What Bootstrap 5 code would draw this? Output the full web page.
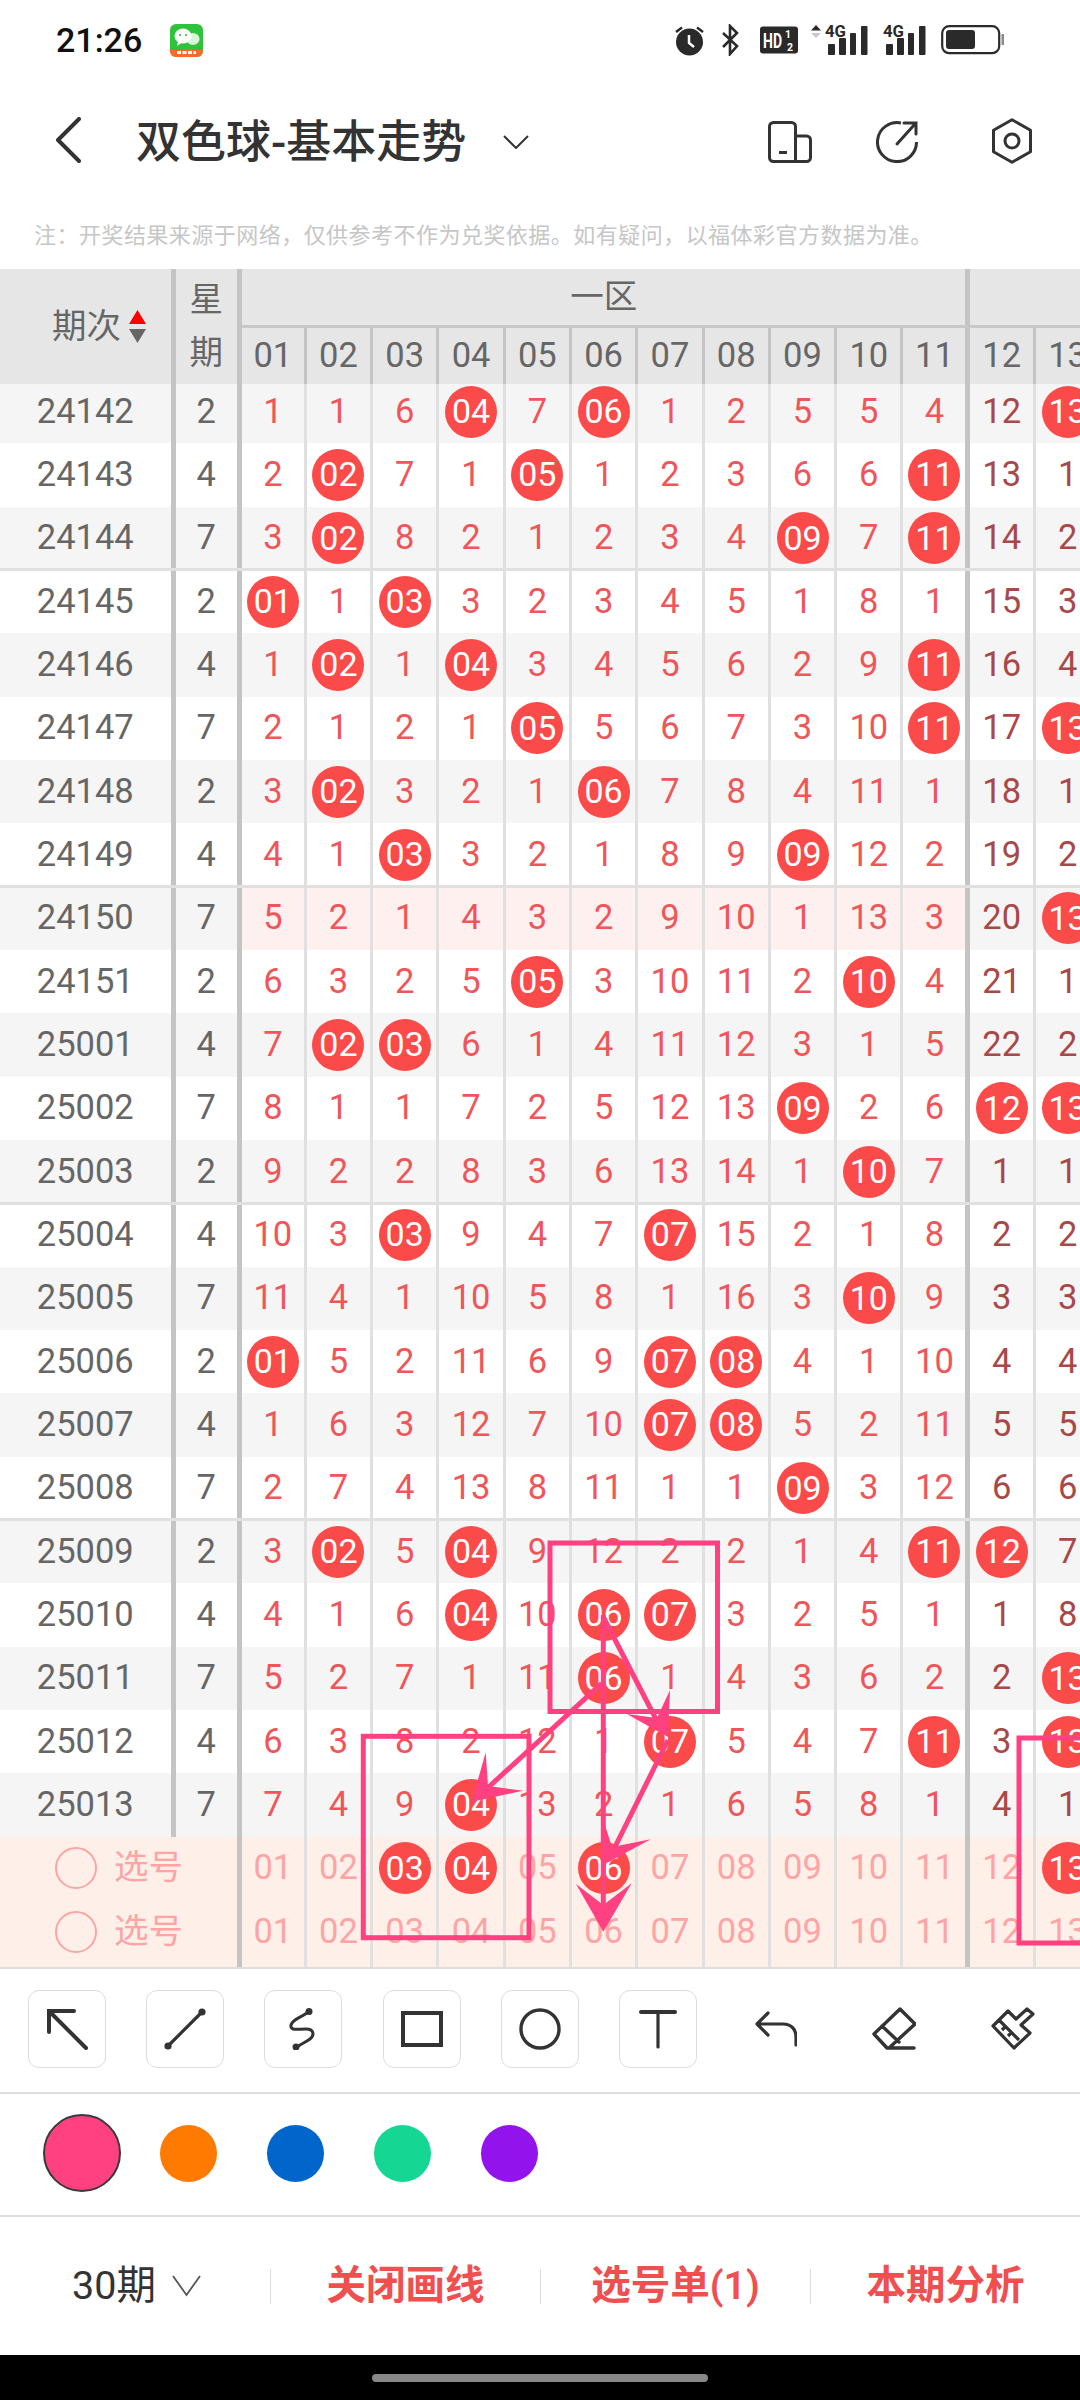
<!DOCTYPE html>
<html lang="zh-CN">
<head>
  <meta charset="UTF-8">
  <meta name="viewport" content="width=device-width, initial-scale=1">
  <title>双色球-基本走势</title>
  <link href="https://cdn.jsdelivr.net/npm/bootstrap@5.3.0/dist/css/bootstrap.min.css" rel="stylesheet">
  <style>
    :root {
      --cols: 175.6px 66.4px 64.8px repeat(9, 66.3px) 67px 65.5px 66.3px;
      --sep-dark: #c4c4c4;
      --sep-light: #e0e0e0;
      --ball: #fb4a4a;
      --pen: #ff4081;
    }
    body {
      font-family: Roboto, "Noto Sans CJK SC", sans-serif;
      background: #fff;
      color: #333;
    }
    .phone { position: relative; width: 1080px; height: 2400px; overflow: hidden; }

    /* status bar */
    .status-bar { height: 80px; padding: 0 75px 0 56px; }
    .status-time { font-size: 34px; font-weight: 500; color: #111; margin-right: 28px; }
    .status-icons { column-gap: 12px; }
    .sig-icon { margin-bottom: 4px; }

    /* title */
    .title-bar { height: 124px; padding: 0 47px 0 55px; }
    .title-back { margin-bottom: 5px; }
    .title-text { font-size: 45px; font-weight: 500; color: #333; margin-left: 55px; line-height: 1; }
    .title-drop { margin-left: 37px; }
    .nav-device { margin-bottom: 1px; }
    .nav-share { margin-left: 64px; margin-bottom: 1px; }
    .nav-hex { margin-left: 73px; margin-bottom: 3px; }
    .note-line { height: 65px; padding: 0 0 3px 34px; font-size: 22px; letter-spacing: .47px; color: #c6c6c6; white-space: nowrap; }

    /* trend table */
    .trend { height: 1698px; overflow: hidden; font-size: 34.5px; }
    .trend-head { position: relative; z-index: 1; display: grid; grid-template-columns: var(--cols); grid-template-rows: 59px 56px; height: 115px; background: #e6e6e6; color: #666; }
    .head-side { grid-row: 1 / 3; border-right: 5px solid var(--sep-dark); }
    .head-stack { line-height: 53px; font-size: 33.5px; }
    .head-period { font-size: 34.5px; padding-left: 52px; }
    .head-zone { border-bottom: 3px solid #c8c8c8; }
    .head-zone-a { grid-column: 3 / 14; font-size: 33.5px; border-right: 5px solid var(--sep-dark); }
    .head-zone-b { grid-column: 14 / 16; }
    .head-num { border-right: 3px solid var(--sep-dark); }
    .head-num.is-edge { border-right-width: 5px; }
    .trend-body { margin-top: -4px; }
    .tr-row { position: relative; display: grid; grid-template-columns: var(--cols); height: 63.33px; background: #fff; }
    .tr-row.is-gray { background: #f5f5f5; }
    .tr-row.is-pick { background: #ffefe9; }
    .tr-row.is-last { height: 66.83px; }
    .tr-row.is-last .tr-cell { padding-bottom: 3.5px; }
    .tr-row.has-line::before { content: ""; position: absolute; left: 0; right: 0; top: -1.5px; height: 3px; background: #e0e0e0; z-index: 1; }
    .tr-cell { display: flex; align-items: center; justify-content: center; color: #f0555a; border-right: 3px solid var(--sep-light); }
    .tr-cell.is-hl { background: #fff0f0; }
    .tr-cell.is-dark { color: #a84848; }
    .tr-cell.is-side { color: #666; border-right: 5px solid var(--sep-dark); }
    .tr-cell.is-edge { border-right: 5px solid var(--sep-dark); }
    .is-pick .tr-cell, .is-pick .tr-cell.is-dark { color: #fda4a4; }
    .is-pick .tr-cell.tr-pick { grid-column: 1 / 3; padding-left: 55px; color: #fda4a4; font-size: 34.5px; justify-content: flex-start; column-gap: 17px; }
    .pick-ring { width: 42px; height: 42px; border: 2.5px solid #fca5a5; }
    .tr-ball { width: 52px; height: 52px; background: var(--ball); color: #fff; display: flex; align-items: center; justify-content: center; font-size: 34px; }

    /* drawing tools */
    .tool-row { height: 127px; padding: 0 0 3px 28px; column-gap: 40.2px; border-top: 2px solid #ddd; border-bottom: 2px solid #ddd; }
    .tool-btn { width: 78px; height: 78px; padding: 0; display: flex; align-items: center; justify-content: center; background: #fff; border: 1.5px solid #ddd; border-radius: 11px; }
    .tool-btn.is-plain { border-color: transparent; }
    .swatch-row { height: 123px; padding: 0 0 3px 28px; border-bottom: 2px solid #ddd; }
    .swatch-slot { width: 107px; }
    .swatch { width: 57px; height: 57px; }
    .swatch.is-on { width: 78px; height: 78px; border: 2px solid #3a3a3a; }

    /* bottom bar */
    .bottom-bar { height: 138px; }
    .bottom-seg { height: 35px; font-size: 39.5px; font-weight: 600; color: #ef4f4f; }
    .bottom-seg + .bottom-seg { border-left: 1.5px solid #ddd; }
    .bottom-range { color: #333; font-weight: 400; column-gap: 16px; padding-left: 3px; }
    .home-bar { height: 45px; background: #000; }
    .home-pill { width: 336px; height: 8px; background: #888; border-radius: 4px; }

    .pen-layer { position: absolute; left: 0; top: 0; z-index: 2; pointer-events: none; }
  </style>
</head>
<body>
<div class="phone">

  <div class="status-bar d-flex align-items-center">
    <span class="status-time">21:26</span>
    <svg width="33" height="33" viewBox="0 0 33 33">
      <rect width="33" height="33" rx="6" fill="#2fc23b"/>
      <path d="M0 26H33V27A6 6 0 0 1 27 33H6A6 6 0 0 1 0 27Z" fill="#ff6a2a"/>
      <path d="M7 28.5H26" stroke="#fff" stroke-width="3" stroke-dasharray="4 1.5"/>
      <ellipse cx="23" cy="15" rx="6.5" ry="6" fill="#d8f5d8"/>
      <ellipse cx="13" cy="12" rx="8.5" ry="7.5" fill="#fff"/>
      <path d="M8 17L7 22L13 18Z" fill="#fff"/>
      <circle cx="10" cy="11" r="1.1" fill="#2fc23b"/><circle cx="16" cy="11" r="1.1" fill="#2fc23b"/>
    </svg>
    <div class="status-icons d-flex align-items-center ms-auto">
      <svg width="29" height="32" viewBox="0 0 29 32">
        <circle cx="14.5" cy="18" r="13.5" fill="#2a2a2a"/>
        <path d="M1 8L7 3.5M28 8L22 3.5" stroke="#2a2a2a" stroke-width="2.5"/>
        <path d="M14 11V19L19 23" stroke="#fff" stroke-width="2.5" fill="none"/>
      </svg>
      <svg width="28" height="32" viewBox="0 0 28 32">
        <path d="M7 9L21 22L14 30V2L21 9L7 23" fill="none" stroke="#2a2a2a" stroke-width="2.6"/>
      </svg>
      <svg width="43" height="28" viewBox="0 0 43 28">
        <rect x="4" y="0.5" width="38" height="27" rx="3" fill="#2a2a2a"/>
        <text x="7" y="22" font-family="Roboto" font-weight="700" font-size="20" fill="#fff" textLength="19" lengthAdjust="spacingAndGlyphs">HD</text>
        <text x="29" y="12" font-family="Roboto" font-weight="700" font-size="10.5" fill="#fff">1</text>
        <text x="31" y="25" font-family="Roboto" font-weight="700" font-size="10.5" fill="#fff">2</text>
      </svg>
      <svg class="sig-icon" width="57" height="36" viewBox="0 -4 57 36">
        <path d="M0 6.5L5 1L10 6.5Z" fill="#2a2a2a"/>
        <path d="M0 9L5 14L10 9Z" fill="#c8c8c8"/>
        <text x="14" y="13" font-family="Roboto" font-weight="700" font-size="16" fill="#2a2a2a" textLength="21" lengthAdjust="spacingAndGlyphs">4G</text>
        <rect x="17" y="20" width="7" height="11" rx="1" fill="#2a2a2a"/>
        <rect x="28" y="14" width="7" height="17" rx="1" fill="#2a2a2a"/>
        <rect x="39" y="9" width="6" height="22" rx="1" fill="#2a2a2a"/>
        <rect x="50" y="2" width="6.5" height="29" rx="1" fill="#2a2a2a"/>
      </svg>
      <svg class="sig-icon" width="48" height="36" viewBox="0 -4 48 36">
        <text x="3" y="13" font-family="Roboto" font-weight="700" font-size="16" fill="#2a2a2a" textLength="21" lengthAdjust="spacingAndGlyphs">4G</text>
        <rect x="6" y="20" width="7" height="11" rx="1" fill="#2a2a2a"/>
        <rect x="17" y="14" width="7" height="17" rx="1" fill="#2a2a2a"/>
        <rect x="28" y="9" width="6" height="22" rx="1" fill="#2a2a2a"/>
        <rect x="39" y="2" width="6.5" height="29" rx="1" fill="#2a2a2a"/>
      </svg>
      <svg width="65" height="30" viewBox="0 0 65 30">
        <rect x="2.2" y="1.2" width="57" height="27" rx="7" fill="none" stroke="#2a2a2a" stroke-width="2.2"/>
        <rect x="6" y="5" width="29" height="19" rx="3" fill="#2a2a2a"/>
        <rect x="61.5" y="9" width="2.5" height="11" fill="#8a8a8a"/>
      </svg>
    </div>
  </div>

  <div class="title-bar d-flex align-items-center">
    <svg class="title-back" width="26" height="46" viewBox="0 0 26 46">
      <path d="M24 2L3 23L24 44" fill="none" stroke="#333" stroke-width="4" stroke-linecap="round" stroke-linejoin="round"/>
    </svg>
    <span class="title-text">双色球-基本走势</span>
    <svg class="title-drop" width="26" height="14" viewBox="0 0 26 14">
      <path d="M1 1L13 13L25 1" fill="none" stroke="#333" stroke-width="2"/>
    </svg>
    <svg class="nav-device ms-auto" width="44" height="42" viewBox="0 0 44 42">
      <path d="M5.5 1.5H23.5A4 4 0 0 1 27.5 5.5V40.5H5.5A4 4 0 0 1 1.5 36.5V5.5A4 4 0 0 1 5.5 1.5Z" fill="none" stroke="#333" stroke-width="3"/>
      <path d="M27.5 15H38.5A4 4 0 0 1 42.5 19V36.5A4 4 0 0 1 38.5 40.5H27.5M11 31.5H19" fill="none" stroke="#333" stroke-width="3"/>
    </svg>
    <svg class="nav-share" width="42" height="42" viewBox="0 0 42 42">
      <path d="M25 2A19.5 19.5 0 1 0 40.5 21" fill="none" stroke="#333" stroke-width="3"/>
      <path d="M21 23L39 3M28 2H40V13" fill="none" stroke="#333" stroke-width="3" stroke-linecap="round"/>
    </svg>
    <svg class="nav-hex" width="42" height="46" viewBox="0 0 42 46">
      <path d="M21 1.7L39.5 12.2V33.8L21 44.3L2.5 33.8V12.2Z" fill="none" stroke="#333" stroke-width="3" stroke-linejoin="round"/>
      <circle cx="21" cy="23" r="7" fill="none" stroke="#333" stroke-width="3"/>
    </svg>
  </div>

  <div class="note-line d-flex align-items-center">注：开奖结果来源于网络，仅供参考不作为兑奖依据。如有疑问，以福体彩官方数据为准。</div>

  <div class="trend">
    <div class="trend-head" id="trend-head">
      <div class="head-side head-period d-flex align-items-center">期次
        <svg class="ms-2" width="17" height="33" viewBox="0 0 17 33">
          <path d="M8.5 0L17 14H0Z" fill="#f00"/>
          <path d="M0 19H17L8.5 33Z" fill="#666"/>
        </svg>
      </div>
      <div class="head-side head-stack text-center pt-1">星<br>期</div>
      <div class="head-zone head-zone-a d-flex align-items-center justify-content-center">一区</div>
      <div class="head-zone head-zone-b"></div>
    </div>
    <div class="trend-body" id="trend-body"></div>
  </div>

  <div class="tool-row d-flex align-items-center">
    <button class="tool-btn" type="button">
      <svg width="42" height="42" viewBox="0 0 42 42"><path d="M3 24V3H28M3 3L40 40" fill="none" stroke="#333" stroke-width="4" stroke-linecap="round"/></svg>
    </button>
    <button class="tool-btn" type="button">
      <svg width="42" height="42" viewBox="0 0 42 42"><path d="M4 38L38 4" stroke="#333" stroke-width="3.2"/><circle cx="4" cy="38" r="3.6" fill="#333"/><circle cx="38" cy="4" r="3.6" fill="#333"/></svg>
    </button>
    <button class="tool-btn" type="button">
      <svg width="42" height="42" viewBox="0 0 42 42"><path d="M27 3C22 9 11 10 9 17C8 23 15 21 24 21C33 21 32 28 28 31C24 34 19 36 15 39" fill="none" stroke="#333" stroke-width="3"/><circle cx="27" cy="3.6" r="3.5" fill="#333"/><circle cx="14" cy="39" r="3.5" fill="#333"/></svg>
    </button>
    <button class="tool-btn" type="button">
      <svg width="42" height="36" viewBox="0 0 42 36"><rect x="2" y="2" width="38" height="32" fill="none" stroke="#333" stroke-width="4"/></svg>
    </button>
    <button class="tool-btn" type="button">
      <svg width="42" height="42" viewBox="0 0 42 42"><circle cx="21" cy="21" r="19" fill="none" stroke="#333" stroke-width="3.4"/></svg>
    </button>
    <button class="tool-btn" type="button">
      <svg width="38" height="40" viewBox="0 0 38 40"><path d="M2 3H36" stroke="#333" stroke-width="4" stroke-linecap="round"/><path d="M19 3V38" stroke="#333" stroke-width="3.2" stroke-linecap="round"/></svg>
    </button>
    <button class="tool-btn is-plain" type="button">
      <svg width="42" height="36" viewBox="0 0 42 36"><path d="M13 2L2 13L13 24M3 13H28C36 13 41 18 41 26V34" fill="none" stroke="#333" stroke-width="3.2" stroke-linecap="round" stroke-linejoin="round"/></svg>
    </button>
    <button class="tool-btn is-plain" type="button">
      <svg width="44" height="44" viewBox="0 0 44 44"><path d="M28 2L43 17L17 41H15L2 27ZM10 19L27 35M15 41H42" fill="none" stroke="#333" stroke-width="3.4" stroke-linecap="round" stroke-linejoin="round"/></svg>
    </button>
    <button class="tool-btn is-plain" type="button">
      <svg width="44" height="44" viewBox="0 0 44 44"><path d="M36 2L42 7L30 18L39 26L23 41L2 19L17 4L25 12ZM8 13L28 33M11 23L15 19M17 29L21 25" fill="none" stroke="#333" stroke-width="3.2" stroke-linejoin="round"/></svg>
    </button>
  </div>

  <div class="swatch-row d-flex align-items-center">
    <div class="swatch-slot d-flex justify-content-center"><span class="swatch is-on rounded-circle" data-color="#ff4081"></span></div>
    <div class="swatch-slot d-flex justify-content-center"><span class="swatch rounded-circle" data-color="#ff7a00"></span></div>
    <div class="swatch-slot d-flex justify-content-center"><span class="swatch rounded-circle" data-color="#0066cc"></span></div>
    <div class="swatch-slot d-flex justify-content-center"><span class="swatch rounded-circle" data-color="#16d694"></span></div>
    <div class="swatch-slot d-flex justify-content-center"><span class="swatch rounded-circle" data-color="#9313ec"></span></div>
  </div>

  <div class="bottom-bar row g-0 align-items-center">
    <div class="col-3 bottom-seg bottom-range d-flex align-items-center justify-content-center">
      <span>30期</span>
      <svg width="29" height="22" viewBox="0 0 29 22"><path d="M1 1L14.5 20L28 1" fill="none" stroke="#555" stroke-width="1.8"/></svg>
    </div>
    <div class="col-3 bottom-seg d-flex align-items-center justify-content-center">关闭画线</div>
    <div class="col-3 bottom-seg d-flex align-items-center justify-content-center">选号单(1)</div>
    <div class="col-3 bottom-seg d-flex align-items-center justify-content-center">本期分析</div>
  </div>

  <div class="home-bar d-flex align-items-center justify-content-center"><span class="home-pill"></span></div>

  <!-- 画线层 -->
  <svg class="pen-layer" width="1080" height="2400" viewBox="0 0 1080 2400">
    <g fill="none" stroke="#ff4081" stroke-width="5">
      <rect x="550" y="1543" width="167.5" height="168.5"/>
      <rect x="363.3" y="1736.3" width="165.7" height="201.4"/>
      <rect x="1019" y="1738" width="120" height="205"/>
      <path d="M603.3 1615V1905"/>
      <path d="M603.3 1617L659 1725"/>
      <path d="M668 1740L612 1853"/>
      <path d="M601.7 1683.3L480 1795"/>
    </g>
    <g fill="#ff4081">
      <path d="M603.3 1931.7L576 1884L603.3 1905L631.7 1883.3Z"/>
      <path d="M668 1737L670 1690L657 1718L626.7 1714Z"/>
      <path d="M606.7 1863L603.3 1820L612 1847L650.7 1839.3Z"/>
      <path d="M471.7 1801.7L485.7 1752.3L488 1786L523.3 1790.7Z"/>
    </g>
  </svg>
</div>

<script src="https://cdn.jsdelivr.net/npm/bootstrap@5.3.0/dist/js/bootstrap.bundle.min.js"></script>
<script>
  // *NN = 中奖号码（红球）
  const rows = [
    ['24142', 2, '1 1 6 *04 7 *06 1 2 5 5 4 12 *13'],
    ['24143', 4, '2 *02 7 1 *05 1 2 3 6 6 *11 13 1'],
    ['24144', 7, '3 *02 8 2 1 2 3 4 *09 7 *11 14 2'],
    ['24145', 2, '*01 1 *03 3 2 3 4 5 1 8 1 15 3'],
    ['24146', 4, '1 *02 1 *04 3 4 5 6 2 9 *11 16 4'],
    ['24147', 7, '2 1 2 1 *05 5 6 7 3 10 *11 17 *13'],
    ['24148', 2, '3 *02 3 2 1 *06 7 8 4 11 1 18 1'],
    ['24149', 4, '4 1 *03 3 2 1 8 9 *09 12 2 19 2'],
    ['24150', 7, '5 2 1 4 3 2 9 10 1 13 3 20 *13'],
    ['24151', 2, '6 3 2 5 *05 3 10 11 2 *10 4 21 1'],
    ['25001', 4, '7 *02 *03 6 1 4 11 12 3 1 5 22 2'],
    ['25002', 7, '8 1 1 7 2 5 12 13 *09 2 6 *12 *13'],
    ['25003', 2, '9 2 2 8 3 6 13 14 1 *10 7 1 1'],
    ['25004', 4, '10 3 *03 9 4 7 *07 15 2 1 8 2 2'],
    ['25005', 7, '11 4 1 10 5 8 1 16 3 *10 9 3 3'],
    ['25006', 2, '*01 5 2 11 6 9 *07 *08 4 1 10 4 4'],
    ['25007', 4, '1 6 3 12 7 10 *07 *08 5 2 11 5 5'],
    ['25008', 7, '2 7 4 13 8 11 1 1 *09 3 12 6 6'],
    ['25009', 2, '3 *02 5 *04 9 12 2 2 1 4 *11 *12 7'],
    ['25010', 4, '4 1 6 *04 10 *06 *07 3 2 5 1 1 8'],
    ['25011', 7, '5 2 7 1 11 *06 1 4 3 6 2 2 *13'],
    ['25012', 4, '6 3 8 2 12 1 *07 5 4 7 *11 3 *13'],
    ['25013', 7, '7 4 9 *04 13 2 1 6 5 8 1 4 1']
  ];
  const picks = [
    '01 02 *03 *04 05 *06 07 08 09 10 11 12 *13',
    '01 02 03 04 05 06 07 08 09 10 11 12 13'
  ];
  const lineRows = ['24145', '24150', '25004', '25009'];

  function numCells(text, opts) {
    return text.split(' ').map((v, i) => {
      const cls = ['tr-cell'];
      if (i === 10) cls.push('is-edge');
      if (i > 10) cls.push('is-dark');
      if (opts.highlight && i <= 10) cls.push('is-hl');
      const inner = v[0] === '*' ? `<span class="tr-ball rounded-circle">${v.slice(1)}</span>` : v;
      return `<div class="${cls.join(' ')}">${inner}</div>`;
    }).join('');
  }

  function renderHead() {
    const head = document.getElementById('trend-head');
    let html = '';
    for (let i = 1; i <= 13; i++) {
      const edge = i === 11 ? ' is-edge' : '';
      html += `<div class="head-num${edge} d-flex align-items-center justify-content-center">${String(i).padStart(2, '0')}</div>`;
    }
    head.insertAdjacentHTML('beforeend', html);
  }

  function renderBody() {
    const body = document.getElementById('trend-body');
    let html = rows.map((r, idx) => {
      const cls = ['tr-row'];
      if (idx % 2 === 0) cls.push('is-gray');
      if (lineRows.includes(r[0])) cls.push('has-line');
      return `<div class="${cls.join(' ')}">
        <div class="tr-cell is-side">${r[0]}</div>
        <div class="tr-cell is-side">${r[1]}</div>
        ${numCells(r[2], { highlight: r[0] === '24150' })}
      </div>`;
    }).join('');
    html += picks.map((p, idx) => `<div class="tr-row is-pick${idx === 1 ? ' is-last' : ''}">
        <div class="tr-cell is-side tr-pick"><span class="pick-ring rounded-circle"></span>选号</div>
        ${numCells(p, {})}
      </div>`).join('');
    body.innerHTML = html;
  }

  renderHead();
  renderBody();
  document.querySelectorAll('.swatch').forEach(s => { s.style.background = s.dataset.color; });
</script>
</body>
</html>
